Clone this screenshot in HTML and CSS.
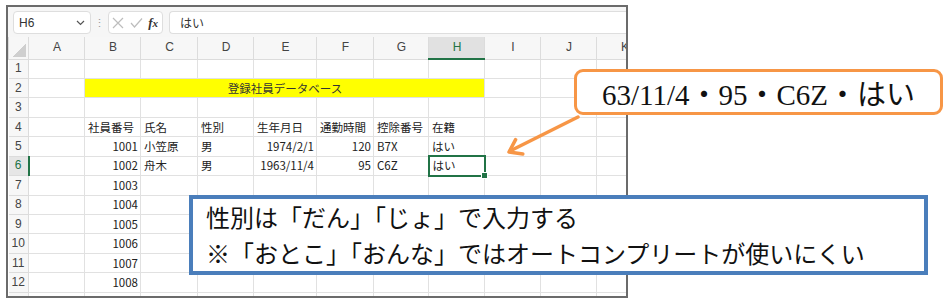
FILE: index.html
```html
<!DOCTYPE html>
<html lang="ja">
<head>
    <meta charset="UTF-8">
    <meta name="viewport" content="width=device-width, initial-scale=1.0">
    <title>登録社員データベース</title>
    <link rel="stylesheet" href="styles.css">
</head>
<body>
    <div class="sheet">
        <!-- 数式バー -->
        <div class="formula-bar">
            <div class="name-box">
                <span>H6</span>
                <svg width="9" height="6" viewBox="0 0 9 6"><path d="M1 1 L4.5 4.5 L8 1" fill="none" stroke="#555" stroke-width="1.2"/></svg>
            </div>
            <span class="grip">⋮</span>
            <div class="fx-box">
                <svg width="12" height="12" viewBox="0 0 12 12"><path d="M1 1 L11 11 M11 1 L1 11" stroke="#bdbdbd" stroke-width="1.2"/></svg>
                <svg width="13" height="12" viewBox="0 0 13 12"><path d="M1 6 L4.5 10 L12 1.5" fill="none" stroke="#bdbdbd" stroke-width="1.2"/></svg>
                <span class="fx">f<i>x</i></span>
            </div>
            <div class="formula-input">はい</div>
        </div>

        <table class="grid">
            <colgroup>
                <col class="col-rh">
                <col class="col-56"><col class="col-56"><col class="col-57"><col class="col-56"><col class="col-63">
                <col class="col-57"><col class="col-55"><col class="col-56"><col class="col-56"><col class="col-56"><col class="col-56">
            </colgroup>
            <thead>
                <tr>
                    <th class="corner"></th>
                    <th>A</th><th>B</th><th>C</th><th>D</th><th>E</th><th>F</th><th>G</th>
                    <th class="active-col">H</th><th>I</th><th>J</th><th>K</th>
                </tr>
            </thead>
            <tbody>
                <tr><th>1</th><td></td><td></td><td></td><td></td><td></td><td></td><td></td><td></td><td></td><td></td><td></td></tr>
                <tr><th>2</th><td></td><td class="title" colspan="7">登録社員データベース</td><td></td><td></td><td></td></tr>
                <tr><th>3</th><td></td><td></td><td></td><td></td><td></td><td></td><td></td><td></td><td></td><td></td><td></td></tr>
                <tr><th>4</th><td></td><td>社員番号</td><td>氏名</td><td>性別</td><td>生年月日</td><td>通勤時間</td><td>控除番号</td><td>在籍</td><td></td><td></td><td></td></tr>
                <tr><th>5</th><td></td><td class="num">1001</td><td>小笠原</td><td>男</td><td class="num">1974/2/1</td><td class="num">120</td><td>B7X</td><td>はい</td><td></td><td></td><td></td></tr>
                <tr><th class="active-row">6</th><td></td><td class="num">1002</td><td>舟木</td><td>男</td><td class="num">1963/11/4</td><td class="num">95</td><td>C6Z</td><td class="selected">はい</td><td></td><td></td><td></td></tr>
                <tr><th>7</th><td></td><td class="num">1003</td><td></td><td></td><td></td><td></td><td></td><td></td><td></td><td></td><td></td></tr>
                <tr><th>8</th><td></td><td class="num">1004</td><td></td><td></td><td></td><td></td><td></td><td></td><td></td><td></td><td></td></tr>
                <tr><th>9</th><td></td><td class="num">1005</td><td></td><td></td><td></td><td></td><td></td><td></td><td></td><td></td><td></td></tr>
                <tr><th>10</th><td></td><td class="num">1006</td><td></td><td></td><td></td><td></td><td></td><td></td><td></td><td></td><td></td></tr>
                <tr><th>11</th><td></td><td class="num">1007</td><td></td><td></td><td></td><td></td><td></td><td></td><td></td><td></td><td></td></tr>
                <tr><th>12</th><td></td><td class="num">1008</td><td></td><td></td><td></td><td></td><td></td><td></td><td></td><td></td><td></td></tr>
                <tr><th>13</th><td></td><td></td><td></td><td></td><td></td><td></td><td></td><td></td><td></td><td></td><td></td></tr>
            </tbody>
        </table>
    </div>

    <!-- 吹き出しの矢印 -->
    <svg class="arrow" width="943" height="303" viewBox="0 0 943 303">
        <path d="M578 117 L510 151" stroke="#f79646" stroke-width="3.5" stroke-linecap="round"/>
        <path d="M515.6 139.7 L509 152 L522.8 154" fill="none" stroke="#f79646" stroke-width="3.5" stroke-linecap="round" stroke-linejoin="round"/>
    </svg>

    <div class="note note-sample">63/11/4・95・C6Z・はい</div>

    <div class="note note-rule">
        <p>性別は「だん」「じょ」で入力する</p>
        <p>※「おとこ」「おんな」ではオートコンプリートが使いにくい</p>
    </div>
</body>
</html>
```

FILE: styles.css
```css
body {
    margin: 0;
    width: 943px;
    height: 303px;
    position: relative;
    overflow: hidden;
    background-color: #fff;
    font-family: "Noto Sans CJK JP", sans-serif;
    color: #222;
}
.sheet {
    margin: 5px 0 0 6px;
    width: 618px;
    height: 289px;
    border: 2px solid #6b6b6b;
    overflow: hidden;
    background-color: #fff;
}

/* 数式バー */
.formula-bar {
    height: 30px;
    box-sizing: border-box;
    padding: 4px 0 0 5px;
    display: flex;
    align-items: flex-start;
    background-color: #f6f6f6;
}
.name-box,
.fx-box,
.formula-input {
    height: 23px;
    box-sizing: border-box;
    border: 1px solid #dedede;
    border-radius: 4px;
    background-color: #fff;
    display: flex;
    align-items: center;
}
.name-box {
    width: 78px;
    padding: 0 5px 0 5px;
    justify-content: space-between;
    font-family: "Liberation Sans", sans-serif;
    font-size: 12px;
    color: #333;
}
.grip {
    width: 17px;
    text-align: center;
    line-height: 23px;
    font-size: 11px;
    color: #999;
}
.fx-box {
    width: 55px;
    padding: 0 4px 0 3px;
    justify-content: space-between;
}
.fx {
    font-family: "Liberation Serif", serif;
    font-style: italic;
    font-weight: bold;
    font-size: 13px;
    color: #333;
}
.fx i {
    font-size: 11px;
}
.formula-input {
    flex: 1;
    margin-left: 6px;
    padding-left: 10px;
    font-size: 12px;
    color: #333;
    border-right: none;
    border-radius: 4px 0 0 4px;
}

/* シート本体 */
.grid {
    table-layout: fixed;
    width: 644px;
    border-collapse: collapse;
    font-size: 11.5px;
}
.col-rh { width: 20px; }
.col-55 { width: 55px; }
.col-56 { width: 56px; }
.col-57 { width: 57px; }
.col-63 { width: 63px; }
.grid th,
.grid td {
    border: 1px solid #e1e1e1;
    padding: 0 2px 0 3px;
    height: 19.45px;
    box-sizing: border-box;
    white-space: nowrap;
    overflow: hidden;
    line-height: 17px;
}
.grid thead th {
    height: 22px;
    font-family: "Liberation Sans", sans-serif;
    font-weight: normal;
    font-size: 12px;
    color: #444;
    background-color: #f7f7f7;
    border-color: #dcdcdc;
    border-top: none;
}
.grid tbody th {
    font-family: "Liberation Sans", sans-serif;
    font-weight: normal;
    font-size: 12px;
    color: #444;
    background-color: #f7f7f7;
    border-color: #dcdcdc;
    border-left: none;
    padding: 0;
    text-align: center;
}
.grid .corner {
    position: relative;
}
.grid .corner::after {
    content: "";
    position: absolute;
    right: 2px;
    bottom: 2px;
    width: 13px;
    height: 13px;
    background: linear-gradient(to top left, #cfcfcf 50%, transparent 50%);
}
.grid .active-col {
    background-color: #e1e1e1;
    color: #217346;
    border-bottom: 2px solid #217346;
}
.grid .active-row {
    background-color: #e6e6e6;
    color: #217346;
    border-right: 2px solid #217346;
}
.grid .title {
    background-color: #ffff00;
    text-align: center;
    color: #333;
}
.grid .num {
    text-align: right;
    padding-right: 2px;
}
.grid .selected {
    position: relative;
    border: 2px solid #217346;
    overflow: visible;
}
.grid .selected::after {
    content: "";
    position: absolute;
    right: -4px;
    bottom: -4px;
    width: 5px;
    height: 5px;
    background-color: #217346;
    border: 1px solid #fff;
}

/* 吹き出し */
.arrow {
    position: absolute;
    top: 0;
    left: 0;
    pointer-events: none;
}
.note {
    position: absolute;
    box-sizing: border-box;
    background-color: #fff;
    color: #111;
}
.note-sample {
    left: 574px;
    top: 69px;
    width: 369px;
    height: 46px;
    border: 3px solid #f79646;
    border-radius: 9px;
    display: flex;
    align-items: center;
    justify-content: center;
    font-family: "Liberation Serif", "Noto Sans CJK JP", serif;
    font-size: 29px;
}
.note-rule {
    left: 189px;
    top: 195px;
    width: 739px;
    height: 80px;
    border: 4px solid #4a7ebb;
    padding: 0 0 0 13px;
    font-size: 24px;
    line-height: 36px;
}
.note-rule p {
    margin: 0;
}
```
